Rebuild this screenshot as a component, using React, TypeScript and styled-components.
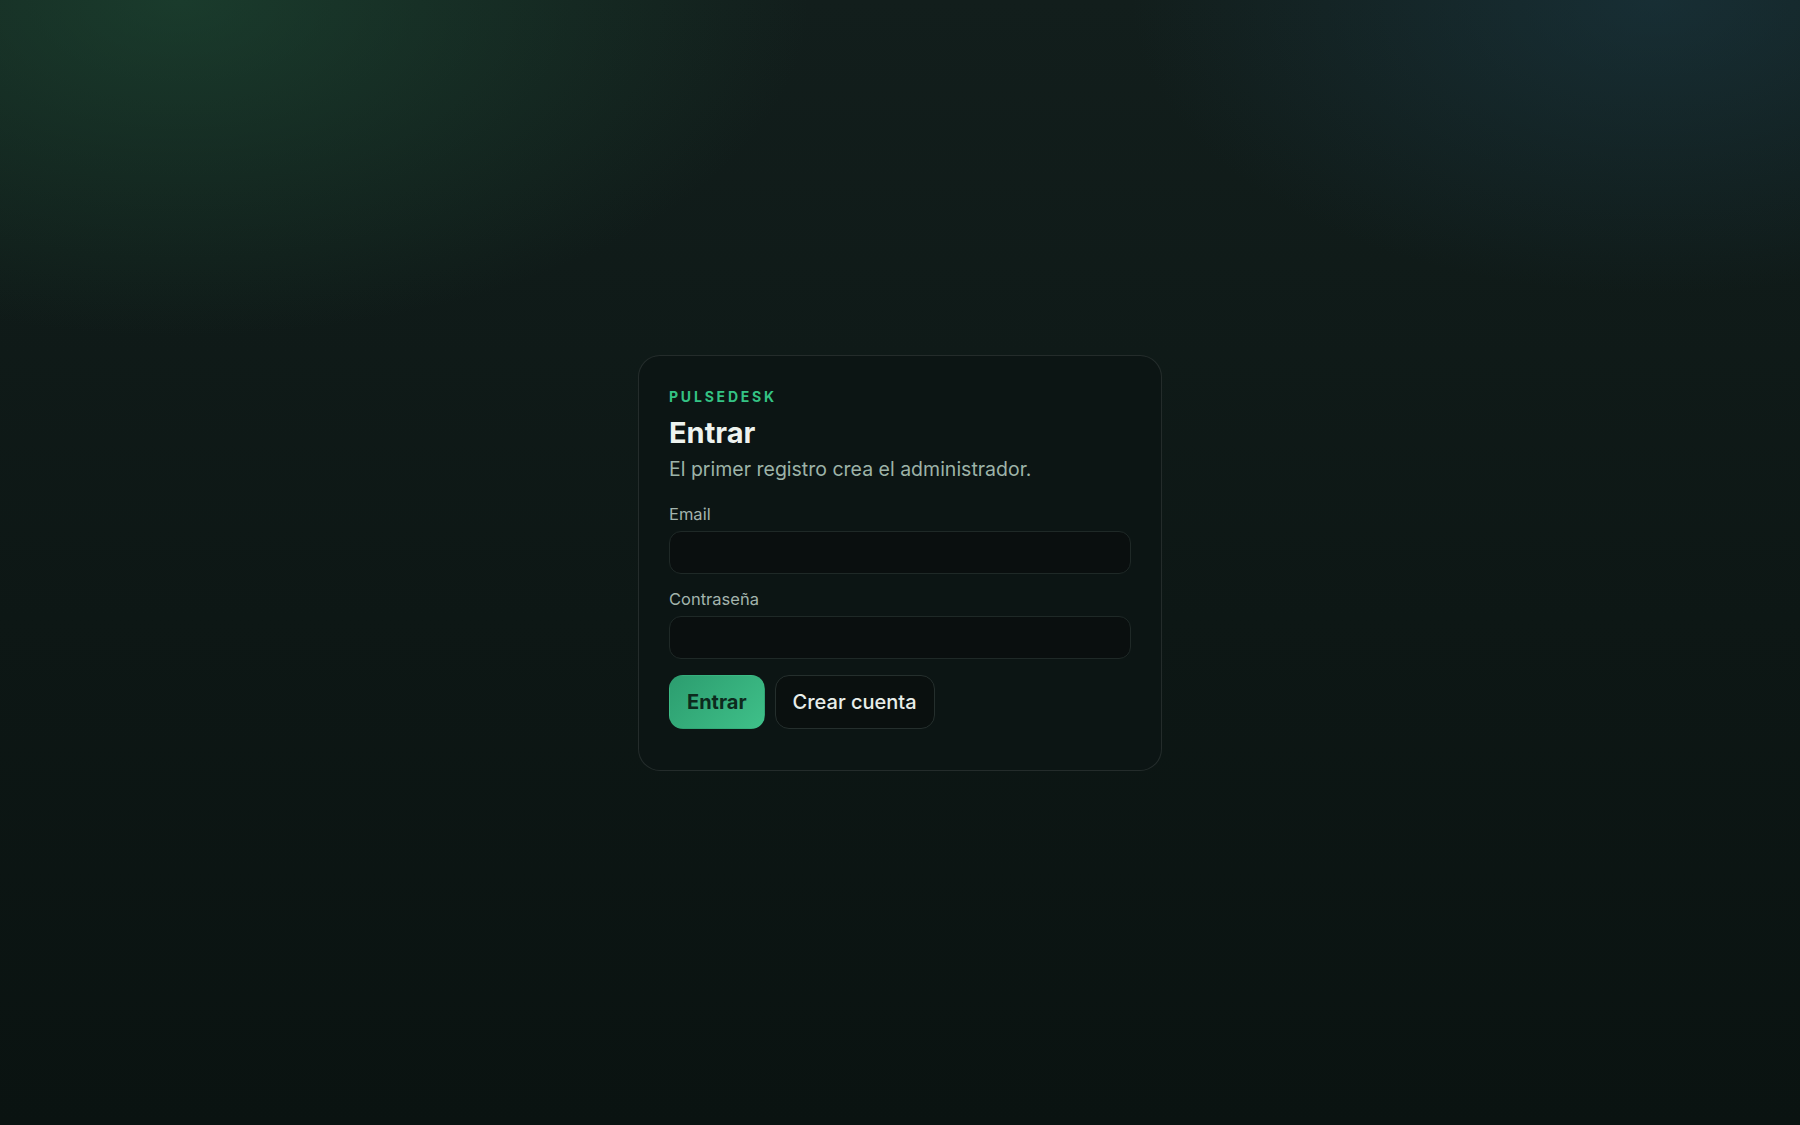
import React from 'react';
import styled, { createGlobalStyle } from 'styled-components';

const GlobalStyle = createGlobalStyle`
  * { box-sizing: border-box; }
  html, body, #root { height: 100%; }
  body {
    margin: 0;
    font-family: 'Inter', 'Noto Sans', sans-serif;
    background-color: #0a1311;
  }
`;

const Page = styled.div`
  min-height: 100vh;
  display: flex;
  align-items: center;
  justify-content: center;
  background:
    radial-gradient(ellipse 900px 480px at 10% 0%, rgba(34, 88, 60, 0.5), transparent 70%),
    radial-gradient(ellipse 750px 420px at 92% 0%, rgba(30, 66, 82, 0.45), transparent 70%),
    linear-gradient(180deg, #121e1c 0%, #0d1715 55%, #0a1311 100%);
`;

const Card = styled.div`
  width: 524px;
  padding: 32px 30px 41px;
  background: #0c1514;
  border: 1px solid rgba(255, 255, 255, 0.1);
  border-radius: 22px;
`;

const Brand = styled.div`
  font-size: 14px;
  font-weight: 700;
  line-height: 18px;
  letter-spacing: 0.2em;
  color: #34c384;
  margin-bottom: 10px;
`;

const Title = styled.h1`
  margin: 0;
  font-size: 29px;
  line-height: 34px;
  font-weight: 700;
  color: #eef3ef;
`;

const Subtitle = styled.p`
  margin: 6px 0 0;
  font-size: 19.5px;
  line-height: 26px;
  color: #9db3a8;
`;

const Form = styled.form`
  margin-top: 22px;
  display: flex;
  flex-direction: column;
  gap: 15px;
`;

const Field = styled.label`
  display: flex;
  flex-direction: column;
  gap: 7px;
`;

const Label = styled.span`
  font-size: 16.5px;
  line-height: 20px;
  color: #a3b4ad;
`;

const Input = styled.input`
  height: 43px;
  width: 100%;
  padding: 0 14px;
  background: #0a0f0f;
  border: 1px solid #1f2927;
  border-radius: 12px;
  color: #eef3ef;
  font: inherit;
  font-size: 16px;
  outline: none;
`;

const Actions = styled.div`
  display: flex;
  gap: 10px;
  margin-top: 1px;
`;

const Button = styled.button<{ $primary?: boolean }>`
  height: 54px;
  padding: 0 17px;
  border-radius: 14px;
  font-family: inherit;
  font-size: 20px;
  font-weight: ${(p) => (p.$primary ? 700 : 500)};
  cursor: pointer;
  color: ${(p) => (p.$primary ? '#0d2a1d' : '#e8eeea')};
  background: ${(p) =>
    p.$primary ? 'linear-gradient(135deg, #2c9d6f 0%, #3fc089 100%)' : '#0a100f'};
  border: 1px solid ${(p) => (p.$primary ? 'transparent' : '#252f2d')};
`;

export default function App() {
  return (
    <>
      <GlobalStyle />
      <Page>
        <Card>
          <Brand>PULSEDESK</Brand>
          <Title>Entrar</Title>
          <Subtitle>El primer registro crea el administrador.</Subtitle>
          <Form onSubmit={(e) => e.preventDefault()}>
            <Field>
              <Label>Email</Label>
              <Input type="email" />
            </Field>
            <Field>
              <Label>Contraseña</Label>
              <Input type="password" />
            </Field>
            <Actions>
              <Button $primary type="submit">Entrar</Button>
              <Button type="button">Crear cuenta</Button>
            </Actions>
          </Form>
        </Card>
      </Page>
    </>
  );
}
